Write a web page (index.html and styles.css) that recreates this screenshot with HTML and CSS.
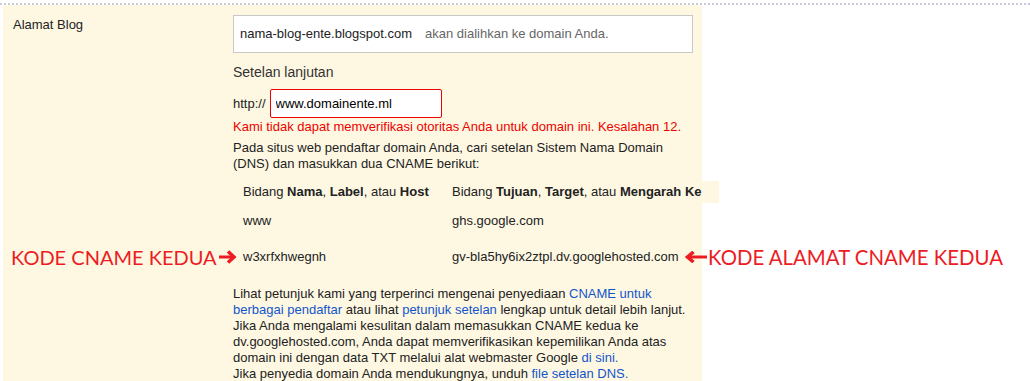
FILE: index.html
```html
<!DOCTYPE html>
<html lang="id">
<head>
    <meta charset="UTF-8">
    <meta name="viewport" content="width=device-width, initial-scale=1.0">
    <title>Alamat Blog</title>
    <link rel="stylesheet" href="styles.css">
</head>
<body>
    <div class="top-line"></div>
    <div class="panel">
        <div class="label">Alamat Blog</div>
        <div class="content">
            <div class="blog-box">
                <span class="blog-url">nama-blog-ente.blogspot.com</span>
                <span class="redirect-note">akan dialihkan ke domain Anda.</span>
            </div>
            <div class="advanced">Setelan lanjutan</div>
            <div class="http-row">
                <span>http://</span>
                <input type="text" class="domain-input" value="www.domainente.ml">
            </div>
            <div class="error">Kami tidak dapat memverifikasi otoritas Anda untuk domain ini. Kesalahan 12.</div>
            <p class="help">Pada situs web pendaftar domain Anda, cari setelan Sistem Nama Domain (DNS) dan masukkan dua CNAME berikut:</p>
            <div class="dns">
                <table class="dns-table">
                    <thead>
                        <tr>
                            <th class="col-host">Bidang <b>Nama</b>, <b>Label</b>, atau <b>Host</b></th>
                            <th class="col-target">Bidang <b>Tujuan</b>, <b>Target</b>, atau <b>Mengarah Ke</b></th>
                        </tr>
                    </thead>
                    <tbody>
                        <tr>
                            <td>www</td>
                            <td>ghs.google.com</td>
                        </tr>
                        <tr>
                            <td>w3xrfxhwegnh</td>
                            <td>gv-bla5hy6ix2ztpl.dv.googlehosted.com</td>
                        </tr>
                    </tbody>
                </table>
                <div class="note note-left">
                    KODE CNAME KEDUA
                    <svg width="18" height="14" viewBox="0 0 18 14">
                        <line x1="0" y1="7" x2="15" y2="7" stroke="#ed1c24" stroke-width="3"/>
                        <polyline points="9,1.5 15,7 9,12.5" fill="none" stroke="#ed1c24" stroke-width="3.5"/>
                    </svg>
                </div>
                <div class="note note-right">
                    <svg width="22" height="12" viewBox="0 0 22 12">
                        <line x1="3" y1="6" x2="22" y2="6" stroke="#ed1c24" stroke-width="3"/>
                        <polyline points="8.5,1 2.5,6 8.5,11" fill="none" stroke="#ed1c24" stroke-width="3.5"/>
                    </svg>
                    KODE ALAMAT CNAME KEDUA
                </div>
            </div>
            <p class="more">
                Lihat petunjuk kami yang terperinci mengenai penyediaan <a href="#">CNAME untuk berbagai pendaftar</a> atau lihat <a href="#">petunjuk setelan</a> lengkap untuk detail lebih lanjut.<br>
                Jika Anda mengalami kesulitan dalam memasukkan CNAME kedua ke dv.googlehosted.com, Anda dapat memverifikasikan kepemilikan Anda atas domain ini dengan data TXT melalui alat webmaster Google <a href="#">di sini.</a><br>
                Jika penyedia domain Anda mendukungnya, unduh <a href="#">file setelan DNS.</a>
            </p>
        </div>
    </div>
</body>
</html>
```

FILE: styles.css
```css
body {
    font-family: 'Liberation Sans', Arial, sans-serif;
    font-size: 13px;
    line-height: 16px;
    color: #222;
    background-color: #fff;
    margin: 0;
    padding: 0;
}
.top-line {
    margin-top: 3px;
    border-top: 2px dotted #c9cbdb;
}
.panel {
    display: grid;
    grid-template-columns: 230px 460px;
    width: 699px;
    height: 376px;
    margin-left: 3px;
    padding-top: 10px;
    box-sizing: border-box;
    background-color: #fef8e2;
}
.label {
    padding: 2px 0 0 10px;
}
.blog-box {
    display: flex;
    align-items: center;
    gap: 13px;
    height: 38px;
    padding: 0 6px;
    border: 1px solid #c8c8c8;
    background-color: #fff;
    box-sizing: border-box;
}
.redirect-note {
    color: #666;
}
.advanced {
    margin-top: 10px;
    font-size: 14px;
    line-height: 18px;
    color: #333;
}
.http-row {
    display: flex;
    align-items: center;
    gap: 4px;
    margin-top: 8px;
}
.domain-input {
    width: 172px;
    height: 29px;
    margin: 0;
    padding: 0 5px;
    border: 1px solid #e00;
    border-radius: 2px;
    box-sizing: border-box;
    font-family: inherit;
    font-size: 13px;
    color: #000;
    outline: none;
}
.error {
    margin-top: 1px;
    color: #e00;
}
.help {
    margin: 5px 0 0;
}
.dns {
    position: relative;
    margin-top: 9px;
}
.dns-table {
    width: 486px;
    border-collapse: collapse;
    white-space: nowrap;
}
.dns-table th {
    padding: 3px 10px;
    text-align: left;
    font-weight: normal;
    background-color: #fef8e2;
}
.dns-table .col-host {
    width: 189px;
}
.dns-table .col-target {
    width: 257px;
}
.dns-table td {
    padding: 10px;
}
.note {
    position: absolute;
    top: 64px;
    display: flex;
    align-items: center;
    gap: 2px;
    font-family: Lato, 'Liberation Sans', sans-serif;
    font-size: 20px;
    line-height: 24px;
    color: #ed1c24;
    white-space: nowrap;
}
.note-left {
    left: -222px;
}
.note-right {
    left: 452px;
    font-size: 20.4px;
    gap: 1px;
}
.more {
    margin: 11px 0 0;
}
a {
    color: #15c;
    text-decoration: none;
}
```
